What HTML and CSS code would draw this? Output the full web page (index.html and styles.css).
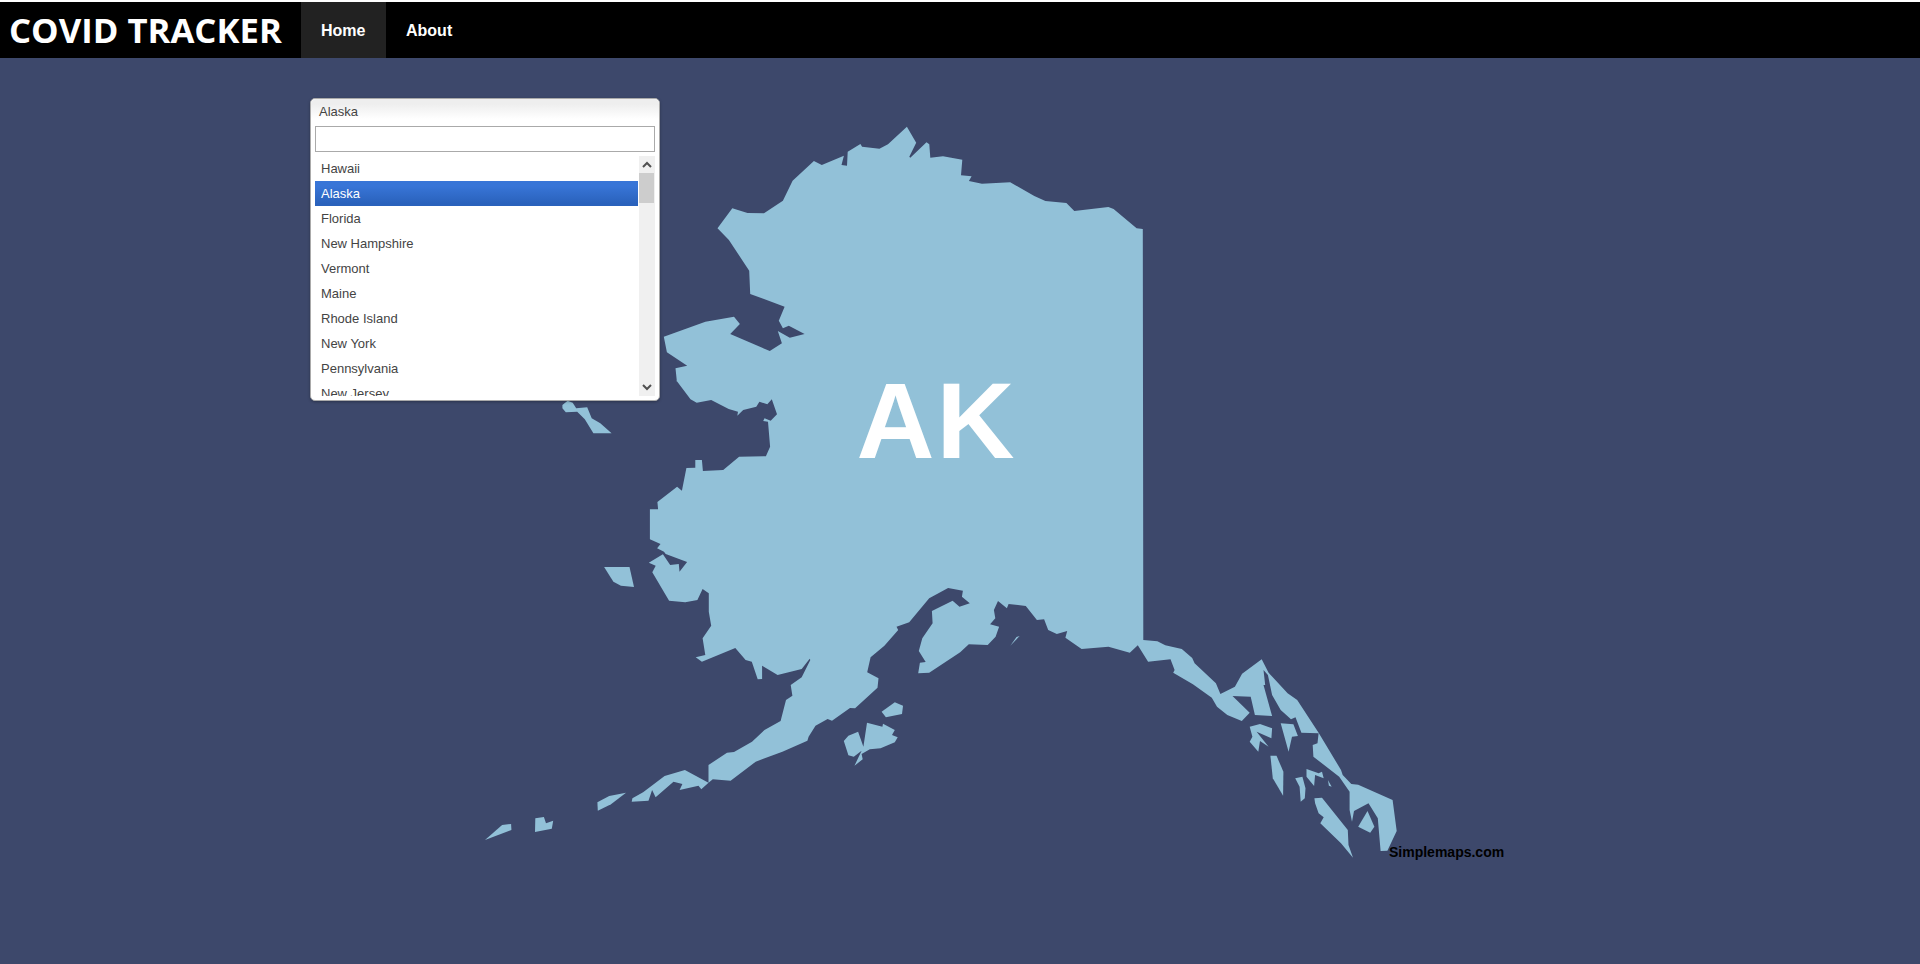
FILE: index.html
```html
<!DOCTYPE html>
<html lang="en">
<head>
    <meta charset="UTF-8">
    <meta name="viewport" content="width=device-width, initial-scale=1.0">
    <title>COVID Tracker</title>
    <link rel="stylesheet" href="styles.css">
</head>
<body>
    <header class="topnav">
        <div class="brand">COVID TRACKER</div>
        <nav class="nav-links">
            <a class="nav-link active" href="#">Home</a>
            <a class="nav-link" href="#">About</a>
        </nav>
    </header>

    <main class="map-area">
        <svg class="state-map" viewBox="0 58 1920 906" width="1920" height="906">
            <!-- mainland and panhandle -->
            <path class="land" d="M906.9 126.7 916.2 142.7 909.3 156.7 910.3 157.7 926.5 142.3 929.3 144.3 930.3 157.7 943 156.3 962.3 159.7 961 175.3 971.6 176.3 968.9 181 982 183.7 1010.2 182.3 1034.3 196 1045.4 201 1066.4 203 1074.3 211 1108.4 207 1113.6 209 1136.6 228.3 1142.8 229 1143.3 640 1157.4 641.3 1165.3 645.3 1181.8 649 1192.2 658 1194.6 663.3 1215.9 683.3 1220.4 694 1234.9 686.7 1242.1 673.7 1261.7 659.3 1268.6 672.7 1287.6 693.3 1297.2 700 1318.6 732.7 1341 770 1342.7 775 1351.3 784 1358.2 784.7 1392.6 800 1396.7 831 1387.4 850.7 1380.6 851 1377.8 818.3 1368.5 803.3 1354 811 1352 821.7 1349.6 810 1349.6 791.7 1339.2 776.7 1313.4 756.7 1312.7 745 1317.5 743.3 1318.6 733.3 1301.4 732.7 1295.5 717.3 1291 719.3 1280.7 710 1272.1 695 1267.9 675 1263.5 670 1265.2 685 1263.5 685 1272.1 716 1254.9 715 1250.7 696.7 1232.5 696 1249.7 712.7 1241.8 721 1227.3 715 1217 706.7 1211.8 697.7 1192.9 684.3 1173.2 672.7 1174.6 670 1170.5 659.3 1148.1 661.7 1137.8 645.3 1129.8 652.7 1108.5 646.7 1081.6 649 1065.4 637.7 1067.2 631 1056.8 634 1048.2 630 1044.1 619.3 1036.9 620 1025.8 606 1008.6 604 1006.9 608.3 998 601 993.9 610 995.3 618.3 990.1 624.3 999.1 626.7 995.6 636.7 987.7 645 968.8 644.3 960.2 652.3 929.2 672.7 918.2 673.3 919.9 662.7 925.7 662 918.8 651 922.3 638.3 932.6 623.3 931.9 611 952.6 600.7 959.5 606.7 969.8 603.3 961.9 596.7 962.9 590.7 948.1 588 929.2 598.3 909.2 622.3 896.5 626.7 898.2 630 884.4 645.7 870.6 657.3 867.2 672.3 878.5 678.3 877.5 687.7 855.1 708.3 850 708 832 720.7 827.6 719 815.5 725.7 808.6 736.7 807.4 740.7 782.4 751.7 755.7 761.7 730.6 780.7 712.8 779.3 708.5 782.7 708.5 765 727 752.7 734 752 752 741.7 764.5 730 780.6 721 786 700 792.4 695.7 790.7 685 801.7 677.3 810.3 660 809.7 658.7 801.7 669 777.6 675 762.1 665.7 762.1 679 757.7 679.3 751.8 661.7 745.6 660 735.3 648 701.9 661.7 695.7 657.3 705.3 655 702.6 638.3 711.2 625.7 708.8 611.7 708.8 593.3 702.6 589 697.4 600 685.3 602.3 669.1 600.7 652.3 572.3 655.7 565.7 648.8 562.7 662.9 554.3 670.2 565 678.8 564 679.5 571.7 687.1 562 665.7 554 664 551.7 657.1 548.3 660.5 544 649.9 539.3 649.9 509.3 658.1 509.3 657.4 502 677.1 486.7 681.9 490.7 686.4 468 695.3 467.7 695.3 460 701.9 460 702.9 471 723.2 470 739.1 456.7 765.9 456.3 770.1 446.7 768 421.7 763.2 421 764.5 418.3 770.7 420.7 777 414.3 771.8 399.3 767.3 404.3 759.4 401.7 756.3 406.7 743.2 410 737.3 415.7 738 411.7 728.7 409 711.2 400 696.7 402.7 690.5 399.3 676 380 676.9 381.7 675.5 368.3 687.2 365.7 666.9 352.3 663.8 336.7 705.4 321.7 734 316.7 739.9 324 730.2 334 769.8 351 781.9 343.3 777.8 331 789.8 337.7 804.6 334 788.8 325.7 782.9 328.3 778.8 320.7 784.6 306.7 750.2 294 749.2 270.7 728.9 240 717.5 228.3 732.3 208.3 747.5 213 764 213.3 782.9 200.7 792.6 180.7 813.9 161 821.8 165 843.9 155.7 841.5 165 847 165.7 847.7 151.7 860.4 144 862.1 146.7 879.4 148.7 888 144.3Z"/>
            <!-- western islands -->
            <path class="land" d="M562.4 405 567.6 400.7 572.7 402.7 576.2 408.3 587.2 407.3 591.7 418.3 600.3 423.3 611.6 433.3 593.4 433.3 584.8 419.3 577.2 411.7 565.8 412.3 562.4 408.3Z"/>
            <path class="land" d="M604.1 567 629.5 567 634 587 620.9 585.7 613.4 581.7Z"/>
            <!-- kodiak and afognak -->
            <path class="land" d="M843.8 741 848.4 735.7 858.1 731.7 863.4 746.7 867 722.7 882.4 726.7 883 723.7 894.8 730 892 735 897.7 737.3 894.8 742.3 880.6 748.3 869.8 749.3 861.6 754 862.7 759.3 854.5 765.7 859.1 756 861.6 750.7 853.8 756.7 848.4 755.3Z"/>
            <path class="land" d="M881.6 711.7 894.8 702.3 903 705.7 902 714 885.9 717.3Z"/>
            <!-- aleutians -->
            <path class="land" d="M708.5 782.7 684.9 770 664.6 776 643.1 792.3 632.4 798.3 631.7 801.7 648.5 800.7 652.1 790 655.6 797.3 673.5 781.7 682.4 784 679.6 790 698.5 785.7 701.3 789.3Z"/>
            <path class="land" d="M597.4 802.3 609.2 796 626 792.7 611 804.3 597.8 810.7Z"/>
            <path class="land" d="M535.3 818.3 543.9 817 546 823.3 553.2 820.7 551.8 828.7 535 832Z"/>
            <path class="land" d="M485 840 502.1 825 511.1 824 511.4 830Z"/>
            <!-- panhandle islands -->
            <path class="land" d="M1249.7 726.7 1260 724 1272.1 728.3 1271.4 738.3 1256.6 731.7 1268.6 746.7 1260 741 1258.3 751.7 1249.7 741.7 1252.4 736.7Z"/>
            <path class="land" d="M1280.7 723.3 1293.4 724.3 1297.9 736 1292 736.7 1288.6 751.7Z"/>
            <path class="land" d="M1270.4 755.7 1276.5 755.7 1283.4 771.7 1283.1 795.7 1272.8 778.3Z"/>
            <path class="land" d="M1295.2 778.3 1302.4 776.7 1305.5 788.3 1304.8 798.3 1300.7 801.7 1299.6 786.7Z"/>
            <path class="land" d="M1306.5 769 1318.6 773.3 1322 771.7 1323.7 778.3 1315.1 775 1314.1 786 1306.5 776.7Z"/>
            <path class="land" d="M1327.9 780 1331.7 786.7 1328.9 785.7Z"/>
            <path class="land" d="M1314.4 798.3 1322 797.7 1347.8 830 1348.5 845 1353 857.7 1341 843.3 1320.3 823.3 1323.7 817.3 1318.6 813.3 1315.1 803.3Z"/>
            <path class="land" d="M1358.2 826.7 1367.5 811 1374.4 826.7 1370.2 832.7Z"/>
            <path class="land" d="M1010.3 645.7 1019.6 636 1016.5 637Z"/>

            <text class="state-label" x="936.5" y="458">AK</text>
            <text class="map-credit" x="1389" y="857">Simplemaps.com</text>
        </svg>

        <div class="chosen">
            <div class="chosen-single">Alaska</div>
            <div class="chosen-drop">
                <input class="chosen-search" type="text">
                <div class="chosen-body">
                    <ul class="chosen-results">
                        <li>Hawaii</li>
                        <li class="highlighted">Alaska</li>
                        <li>Florida</li>
                        <li>New Hampshire</li>
                        <li>Vermont</li>
                        <li>Maine</li>
                        <li>Rhode Island</li>
                        <li>New York</li>
                        <li>Pennsylvania</li>
                        <li>New Jersey</li>
                    </ul>
                    <div class="scrollbar">
                        <svg class="scroll-arrow" viewBox="0 0 16 17" width="16" height="17"><path d="M4 11 8 7 12 11" /></svg>
                        <div class="scroll-thumb"></div>
                        <svg class="scroll-arrow arrow-down" viewBox="0 0 16 17" width="16" height="17"><path d="M4 6 8 10 12 6" /></svg>
                    </div>
                </div>
            </div>
        </div>
    </main>
</body>
</html>
```

FILE: styles.css
```css
html, body {
    margin: 0;
    padding: 0;
    height: 100%;
    overflow: hidden;
}
body {
    background-color: #3d486b;
    font-family: "Liberation Sans", Arial, sans-serif;
}
.topnav {
    display: flex;
    height: 56px;
    border-top: 2px solid #fff;
    background-color: #000;
}
.brand {
    width: 301px;
    box-sizing: border-box;
    padding-left: 9px;
    font-family: "Open Sans", sans-serif;
    font-size: 34.7px;
    font-weight: 700;
    line-height: 56px;
    color: #fff;
    white-space: nowrap;
}
.nav-links {
    display: flex;
}
.nav-link {
    padding: 1px 20px 0;
    font-size: 16px;
    font-weight: 700;
    line-height: 56px;
    color: #fff;
    text-decoration: none;
}
.nav-link.active {
    width: 45px;
    background-color: #222;
}
.map-area {
    position: relative;
    height: 906px;
}
.state-map {
    display: block;
}
.land {
    fill: #92c1d8;
}
.state-label {
    font-size: 108px;
    font-weight: 700;
    letter-spacing: 2px;
    fill: #fff;
    text-anchor: middle;
}
.map-credit {
    font-size: 14px;
    font-weight: 700;
    fill: #000;
}
.chosen {
    position: absolute;
    left: 310px;
    top: 40px;
    width: 350px;
    box-sizing: border-box;
    border: 1px solid #aaa;
    border-radius: 5px;
    background-color: #fff;
    box-shadow: 0 1px 3px rgba(0, 0, 0, 0.3);
    font-size: 13px;
    color: #444;
}
.chosen-single {
    height: 25px;
    padding-left: 8px;
    line-height: 26px;
    border-radius: 5px 5px 0 0;
    background: linear-gradient(#eee 20%, #fff 80%);
}
.chosen-drop {
    padding: 2px 4px 4px;
}
.chosen-search {
    display: block;
    width: 100%;
    height: 26px;
    box-sizing: border-box;
    margin: 0;
    padding: 4px 5px;
    border: 1px solid #aaa;
    background-color: #fff;
    outline: none;
}
.chosen-body {
    display: flex;
    height: 240px;
    margin-top: 4px;
    overflow: hidden;
}
.chosen-results {
    flex: 1;
    margin: 0 1px 0 0;
    padding: 0;
    list-style: none;
}
.chosen-results li {
    height: 25px;
    box-sizing: border-box;
    padding: 5px 6px;
    line-height: 15px;
}
.chosen-results .highlighted {
    background: linear-gradient(#3875d7 20%, #2a62bc 90%);
    color: #fff;
}
.scrollbar {
    display: flex;
    flex-direction: column;
    width: 16px;
    background-color: #f0f0f0;
}
.scroll-arrow {
    display: block;
    flex: none;
}
.scroll-arrow path {
    fill: none;
    stroke: #505050;
    stroke-width: 2;
}
.arrow-down {
    margin-top: auto;
}
.scroll-thumb {
    height: 30px;
    width: 15px;
    background-color: #cdcdcd;
}
```
